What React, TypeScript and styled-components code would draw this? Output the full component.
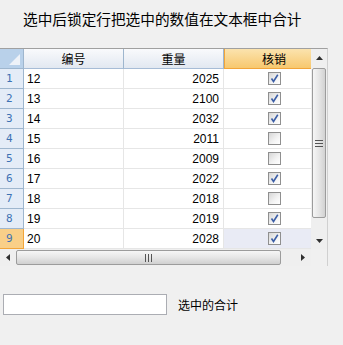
import React from "react";
import styled, { createGlobalStyle } from "styled-components";

const Global = createGlobalStyle`
  html, body { margin: 0; padding: 0; background: #f0f0f0; }
  body { font-family: "Noto Sans CJK SC", "Liberation Sans", sans-serif; color: #000; }
`;

const Page = styled.div`
  width: 343px;
  height: 345px;
  display: flex;
  flex-direction: column;
  overflow: hidden;
`;

const Title = styled.div`
  padding: 8px 0 0 23px;
  height: 48px;
  box-sizing: border-box;
  font-size: 14.67px;
  line-height: 21px;
  white-space: nowrap;
`;

const Frame = styled.div`
  width: 328px;
  box-sizing: border-box;
  border-top: 1px solid #a0a0a0;
  border-right: 1px solid #d0d0d0;
  display: flex;
  flex-direction: column;
`;

const Upper = styled.div`
  display: flex;
  height: 200px;
`;

const Viewport = styled.div`
  width: 311px;
  height: 200px;
  overflow: hidden;
  background: #fff;
`;

const Row = styled.div`
  display: grid;
  grid-template-columns: 24px 100px 100px 100px;
  height: 20px;
  width: 324px;
`;

const Corner = styled.div`
  position: relative;
  background: #b9d1ea;
  border-right: 1px solid #9eb6ce;
  border-bottom: 1px solid #9eb6ce;
  box-sizing: border-box;
  &::after {
    content: "";
    position: absolute;
    right: 3px;
    bottom: 3px;
    width: 0;
    height: 0;
    border-left: 11px solid transparent;
    border-bottom: 11px solid #eef2f8;
  }
`;

const ColHead = styled.div<{ $active?: boolean }>`
  box-sizing: border-box;
  display: flex;
  align-items: center;
  justify-content: center;
  font-size: 12px;
  background: ${(p) =>
    p.$active
      ? "linear-gradient(#fbe3ae, #f7c86f)"
      : "linear-gradient(#f9fafc, #e2e8f1)"};
  border-right: 1px solid ${(p) => (p.$active ? "#f2a53a" : "#9eb6ce")};
  border-bottom: 1px solid ${(p) => (p.$active ? "#f2a53a" : "#a7bcd6")};
  border-left: ${(p) => (p.$active ? "1px solid #f2a53a" : "none")};
`;

const RowHead = styled.div<{ $active?: boolean }>`
  box-sizing: border-box;
  display: flex;
  align-items: center;
  padding-left: 6px;
  font-size: 11px;
  font-family: "DejaVu Sans Mono", monospace;
  color: #3d72b4;
  background: ${(p) => (p.$active ? "#f9cf88" : "#e4ecf7")};
  border-right: 1px solid ${(p) => (p.$active ? "#f2a53a" : "#9eb6ce")};
  border-bottom: 1px solid ${(p) => (p.$active ? "#f2a53a" : "#9eb6ce")};
`;

const Cell = styled.div<{ $align?: "left" | "right" | "center"; $current?: boolean }>`
  box-sizing: border-box;
  display: flex;
  align-items: center;
  justify-content: ${(p) =>
    p.$align === "right" ? "flex-end" : p.$align === "center" ? "center" : "flex-start"};
  padding: 0 4px 0 3px;
  font-size: 12px;
  font-family: "Liberation Sans", "Noto Sans CJK SC", sans-serif;
  background: ${(p) => (p.$current ? "#e9ebf5" : "#fff")};
  border-right: 1px solid #e6e6e6;
  border-bottom: 1px solid #e6e6e6;
`;

const Check = styled.div`
  width: 13px;
  height: 13px;
  box-sizing: border-box;
  border: 1px solid #8f8f8f;
  background: linear-gradient(135deg, #d6d6d6, #f4f4f4 60%, #ffffff);
  display: flex;
  align-items: center;
  justify-content: center;
  margin-left: 2px;
`;

const VScroll = styled.div`
  width: 16px;
  height: 200px;
  background: #efefef;
  display: flex;
  flex-direction: column;
  align-items: center;
`;

const ArrowBtn = styled.div`
  width: 16px;
  height: 17px;
  display: flex;
  align-items: center;
  justify-content: center;
  flex: none;
`;

const VThumb = styled.div`
  width: 14px;
  height: 150px;
  margin-top: 2px;
  box-sizing: border-box;
  border: 1px solid #9c9c9c;
  border-radius: 2px;
  background: linear-gradient(to right, #f6f6f6, #e6e6e6 50%, #d2d2d2);
  display: flex;
  align-items: center;
  justify-content: center;
`;

const Lower = styled.div`
  display: flex;
  height: 17px;
`;

const HScroll = styled.div`
  width: 311px;
  height: 17px;
  background: #efefef;
  display: flex;
  align-items: center;
`;

const HThumb = styled.div`
  width: 265px;
  height: 15px;
  box-sizing: border-box;
  border: 1px solid #9c9c9c;
  border-radius: 2px;
  background: linear-gradient(#f6f6f6, #e6e6e6 50%, #d0d0d0);
  display: flex;
  align-items: center;
  justify-content: center;
`;

const HTrack = styled.div`
  flex: 1;
`;

const CornerBox = styled.div`
  width: 16px;
  background: #f0f0f0;
`;

const Bottom = styled.div`
  margin-top: 28px;
  display: flex;
  align-items: center;
  padding-left: 3px;
`;

const TextBox = styled.div`
  width: 164px;
  height: 21px;
  box-sizing: border-box;
  border: 1px solid #abadb3;
  background: #fff;
`;

const Label = styled.span`
  margin-left: 11px;
  font-size: 12px;
  white-space: nowrap;
`;

const data: [number, number, boolean][] = [
  [12, 2025, true],
  [13, 2100, true],
  [14, 2032, true],
  [15, 2011, false],
  [16, 2009, false],
  [17, 2022, true],
  [18, 2018, false],
  [19, 2019, true],
  [20, 2028, true],
];

const Tick = () => (
  <svg width="11" height="11" viewBox="0 0 11 11">
    <path d="M2.5 5.5 L4.5 8.5 L8.8 1.8" stroke="#3c5ea6" strokeWidth="1.6" fill="none" />
  </svg>
);

const Tri = ({ dir }: { dir: "up" | "down" | "left" | "right" }) => {
  const pts = {
    up: "0,4 7,4 3.5,0",
    down: "0,0 7,0 3.5,4",
    left: "4,0 4,7 0,3.5",
    right: "0,0 0,7 4,3.5",
  }[dir];
  const w = dir === "up" || dir === "down" ? 7 : 4;
  const h = dir === "up" || dir === "down" ? 4 : 7;
  return (
    <svg width={w} height={h} viewBox={`0 0 ${w} ${h}`}>
      <polygon points={pts} fill="#303030" />
    </svg>
  );
};

const Grip = ({ vertical }: { vertical?: boolean }) =>
  vertical ? (
    <svg width="8" height="7" viewBox="0 0 8 7">
      <path d="M0 0.5H8M0 3.5H8M0 6.5H8" stroke="#555" strokeWidth="1" />
    </svg>
  ) : (
    <svg width="7" height="8" viewBox="0 0 7 8">
      <path d="M0.5 0V8M3.5 0V8M6.5 0V8" stroke="#555" strokeWidth="1" />
    </svg>
  );

export default function App() {
  return (
    <Page>
      <Global />
      <Title>选中后锁定行把选中的数值在文本框中合计</Title>
      <Frame>
        <Upper>
          <Viewport>
            <Row>
              <Corner />
              <ColHead>编号</ColHead>
              <ColHead>重量</ColHead>
              <ColHead $active>核销</ColHead>
            </Row>
            {data.map(([id, w, c], i) => {
              const last = i === data.length - 1;
              return (
                <Row key={i}>
                  <RowHead $active={last}>{i + 1}</RowHead>
                  <Cell>{id}</Cell>
                  <Cell $align="right">{w}</Cell>
                  <Cell $align="center" $current={last}>
                    <Check>{c && <Tick />}</Check>
                  </Cell>
                </Row>
              );
            })}
          </Viewport>
          <VScroll>
            <ArrowBtn>
              <Tri dir="up" />
            </ArrowBtn>
            <VThumb>
              <Grip vertical />
            </VThumb>
            <HTrack />
            <ArrowBtn>
              <Tri dir="down" />
            </ArrowBtn>
          </VScroll>
        </Upper>
        <Lower>
          <HScroll>
            <ArrowBtn>
              <Tri dir="left" />
            </ArrowBtn>
            <HThumb>
              <Grip />
            </HThumb>
            <HTrack />
            <ArrowBtn>
              <Tri dir="right" />
            </ArrowBtn>
          </HScroll>
          <CornerBox />
        </Lower>
      </Frame>
      <Bottom>
        <TextBox />
        <Label>选中的合计</Label>
      </Bottom>
    </Page>
  );
}
